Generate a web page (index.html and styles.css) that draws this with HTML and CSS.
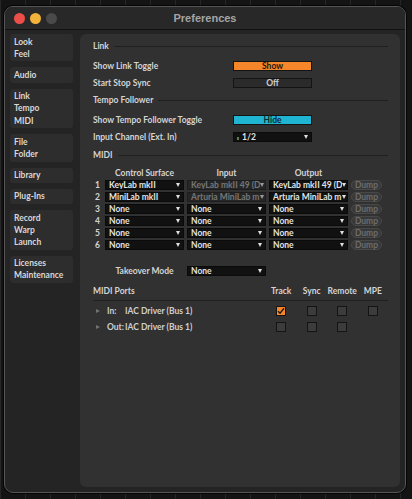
FILE: index.html
```html
<!DOCTYPE html>
<html lang="en">
<head>
  <meta charset="UTF-8" />
  <meta name="viewport" content="width=device-width, initial-scale=1" />
  <title>Preferences</title>
  <link rel="stylesheet" href="styles.css">
</head>
<body>
  <div class="window">
    <div class="titlebar">
      <div class="lights">
        <span class="light red"></span>
        <span class="light yellow"></span>
        <span class="light gray"></span>
      </div>
      <div class="title">Preferences</div>
      <div></div>
    </div>

    <div class="main">
      <nav class="sidebar">
        <div class="tab">Look<br>Feel</div>
        <div class="tab">Audio</div>
        <div class="tab">Link<br>Tempo<br>MIDI</div>
        <div class="tab">File<br>Folder</div>
        <div class="tab">Library</div>
        <div class="tab">Plug-Ins</div>
        <div class="tab">Record<br>Warp<br>Launch</div>
        <div class="tab">Licenses<br>Maintenance</div>
      </nav>

      <section class="panel">
        <div class="section-head">Link</div>
        <div class="setting">
          <span>Show Link Toggle</span>
          <div class="toggle orange">Show</div>
        </div>
        <div class="setting">
          <span>Start Stop Sync</span>
          <div class="toggle">Off</div>
        </div>

        <div class="section-head second">Tempo Follower</div>
        <div class="setting">
          <span>Show Tempo Follower Toggle</span>
          <div class="toggle cyan">Hide</div>
        </div>
        <div class="setting">
          <span>Input Channel (Ext. In)</span>
          <div class="dropdown"><span class="text"><i class="meter"></i>1/2</span><span class="arrow"></span></div>
        </div>

        <div class="section-head third">MIDI</div>
        <div class="midi-grid">
          <span></span>
          <span class="col-head">Control Surface</span>
          <span class="col-head">Input</span>
          <span class="col-head">Output</span>
          <span></span>

          <span class="num">1</span>
          <div class="dropdown"><span class="text">KeyLab mkII</span><span class="arrow"></span></div>
          <div class="dropdown disabled long"><span class="text">KeyLab mkII 49 (D</span><span class="arrow"></span></div>
          <div class="dropdown long"><span class="text">KeyLab mkII 49 (D</span><span class="arrow"></span></div>
          <div class="dump">Dump</div>

          <span class="num">2</span>
          <div class="dropdown"><span class="text">MiniLab mkII</span><span class="arrow"></span></div>
          <div class="dropdown disabled long"><span class="text">Arturia MiniLab m</span><span class="arrow"></span></div>
          <div class="dropdown long"><span class="text">Arturia MiniLab m</span><span class="arrow"></span></div>
          <div class="dump">Dump</div>

          <span class="num">3</span>
          <div class="dropdown"><span class="text">None</span><span class="arrow"></span></div>
          <div class="dropdown"><span class="text">None</span><span class="arrow"></span></div>
          <div class="dropdown"><span class="text">None</span><span class="arrow"></span></div>
          <div class="dump">Dump</div>

          <span class="num">4</span>
          <div class="dropdown"><span class="text">None</span><span class="arrow"></span></div>
          <div class="dropdown"><span class="text">None</span><span class="arrow"></span></div>
          <div class="dropdown"><span class="text">None</span><span class="arrow"></span></div>
          <div class="dump">Dump</div>

          <span class="num">5</span>
          <div class="dropdown"><span class="text">None</span><span class="arrow"></span></div>
          <div class="dropdown"><span class="text">None</span><span class="arrow"></span></div>
          <div class="dropdown"><span class="text">None</span><span class="arrow"></span></div>
          <div class="dump">Dump</div>

          <span class="num">6</span>
          <div class="dropdown"><span class="text">None</span><span class="arrow"></span></div>
          <div class="dropdown"><span class="text">None</span><span class="arrow"></span></div>
          <div class="dropdown"><span class="text">None</span><span class="arrow"></span></div>
          <div class="dump">Dump</div>
        </div>

        <div class="takeover">
          <span></span>
          <span class="takeover-label">Takeover Mode</span>
          <div class="dropdown"><span class="text">None</span><span class="arrow"></span></div>
        </div>

        <div class="ports-head">
          <span class="ports-title">MIDI Ports</span>
          <span>Track</span>
          <span>Sync</span>
          <span>Remote</span>
          <span>MPE</span>
        </div>
        <div class="port">
          <span class="port-name"><i class="expand"></i><span class="dir">In:</span>IAC Driver (Bus 1)</span>
          <span class="check on">
            <svg width="8" height="8" viewBox="0 0 8 8"><path d="M1 4.2 L3.1 6.3 L7 1.3" fill="none" stroke="#2a1a0a" stroke-width="1.4"/></svg>
          </span>
          <span class="check"></span>
          <span class="check"></span>
          <span class="check"></span>
        </div>
        <div class="port">
          <span class="port-name"><i class="expand"></i><span class="dir">Out:</span>IAC Driver (Bus 1)</span>
          <span class="check"></span>
          <span class="check"></span>
          <span class="check"></span>
          <span></span>
        </div>
      </section>
    </div>
  </div>
</body>
</html>
```

FILE: styles.css
```css
body {
  margin: 0;
  padding: 6px 6px 6px 4px;
  background-color: #141414;
  background-image: repeating-linear-gradient(90deg, #262626 0 1px, transparent 1px 25px);
  font-family: Lato, "Liberation Sans", sans-serif;
  font-weight: 700;
  font-size: 8.5px;
  color: #d4d4d4;
}

.window {
  box-sizing: border-box;
  width: 402px;
  height: 487px;
  border: 1px solid #565656;
  border-radius: 9px;
  box-shadow: 0 0 0 1px #050505;
  background: #242424;
  overflow: hidden;
  display: flex;
  flex-direction: column;
}

.titlebar {
  height: 22px;
  border-bottom: 1px solid #111;
  background: #282828;
  display: grid;
  grid-template-columns: 1fr auto 1fr;
  align-items: center;
  padding: 0 5px;
}
.lights {
  display: flex;
  gap: 5px;
  padding-left: 4px;
}
.light {
  width: 11px;
  height: 11px;
  border-radius: 50%;
}
.red { background: #ec4f4a; }
.yellow { background: #f2b33a; }
.gray { background: #4a4a4a; }
.title {
  font-family: "Liberation Sans", sans-serif;
  font-size: 11px;
  font-weight: 700;
  color: #a5a5a5;
}

.main {
  flex: 1;
  display: flex;
  gap: 7px;
  padding: 4px 5px 5px 5px;
}

.sidebar {
  width: 63px;
  display: flex;
  flex-direction: column;
  gap: 6px;
}
.tab {
  background: #2d2d2d;
  border-radius: 3px;
  padding: 1.5px 4px;
  line-height: 12.2px;
  color: #d8d8d8;
}

.panel {
  flex: 1;
  background: #313131;
  border-radius: 6px;
  padding: 6px 12px 0 13px;
  display: flex;
  flex-direction: column;
}

.section-head {
  display: flex;
  align-items: center;
  gap: 5px;
  height: 12px;
  margin-bottom: 5px;
}
.section-head::after {
  content: "";
  flex: 1;
  height: 1px;
  background: #202020;
}
.section-head.second { margin-top: 3px; }
.section-head.third { margin-top: 4px; margin-bottom: 5px; }

.setting {
  display: grid;
  grid-template-columns: 140px 79px;
  align-items: center;
  height: 17px;
}

.toggle {
  box-sizing: border-box;
  height: 10px;
  line-height: 8px;
  border: 1px solid #141414;
  background: #2b2b2b;
  text-align: center;
  color: #d0d0d0;
}
.toggle.orange { background: #f5862a; color: #241709; }
.toggle.cyan { background: #1fb5d2; color: #0d2a31; }

.dropdown {
  box-sizing: border-box;
  min-width: 0;
  height: 10px;
  background: #111;
  border: 1px solid #0a0a0a;
  display: flex;
  align-items: center;
  padding: 0 3px;
  color: #e2e2e2;
  line-height: 8px;
}
.dropdown .text {
  flex: 1;
  min-width: 0;
  overflow: hidden;
  white-space: nowrap;
}
.dropdown .arrow {
  flex: none;
  width: 0;
  height: 0;
  border-left: 2.5px solid transparent;
  border-right: 2.5px solid transparent;
  border-top: 4px solid #e0e0e0;
  margin-left: 1px;
}
.dropdown.long { padding-right: 1px; }
.dropdown.long .text { flex: 0 1 auto; }
.dropdown.long .arrow { margin-left: 0; }
.dropdown.disabled {
  background: #262626;
  border-color: #1e1e1e;
  color: #767676;
}
.dropdown.disabled .arrow { border-top-color: #9a9a9a; }
.meter {
  display: inline-block;
  width: 2px;
  height: 3px;
  background: #5d7d4c;
  margin-right: 3px;
}

.midi-grid {
  display: grid;
  grid-template-columns: 9px 79px 79px 79px 31px;
  grid-template-rows: 13px;
  grid-auto-rows: 12px;
  column-gap: 3px;
  align-items: center;
}
.col-head { text-align: center; }
.num { text-align: center; }
.dump {
  box-sizing: border-box;
  height: 10px;
  line-height: 8px;
  border: 1px solid #484848;
  border-radius: 5px;
  background: #393939;
  color: #6c6c6c;
  text-align: center;
}

.takeover {
  display: grid;
  grid-template-columns: 9px 79px 79px;
  column-gap: 3px;
  align-items: center;
  height: 14px;
  margin-top: 13px;
}
.takeover-label { text-align: center; }

.ports-head {
  display: grid;
  grid-template-columns: 1fr repeat(4, 30.5px);
  align-items: center;
  height: 12px;
  margin-top: 7px;
  padding-bottom: 3px;
  border-bottom: 1px solid #202020;
  text-align: center;
}
.ports-title { text-align: left; }

.port {
  display: grid;
  grid-template-columns: 1fr repeat(4, 30.5px);
  align-items: center;
  justify-items: center;
  height: 16px;
}
.ports-head + .port { margin-top: 2px; }
.port-name {
  justify-self: start;
  display: flex;
  align-items: center;
  color: #cfcfcf;
}
.expand {
  width: 0;
  height: 0;
  border-top: 2.5px solid transparent;
  border-bottom: 2.5px solid transparent;
  border-left: 4px solid #727272;
  margin: 0 7px 0 3px;
}
.dir { width: 18px; }

.check {
  box-sizing: border-box;
  width: 10px;
  height: 10px;
  background: #3c3c3c;
  border: 1px solid #141414;
  display: flex;
  align-items: center;
  justify-content: center;
}
.check.on { background: #f5862a; }
```
